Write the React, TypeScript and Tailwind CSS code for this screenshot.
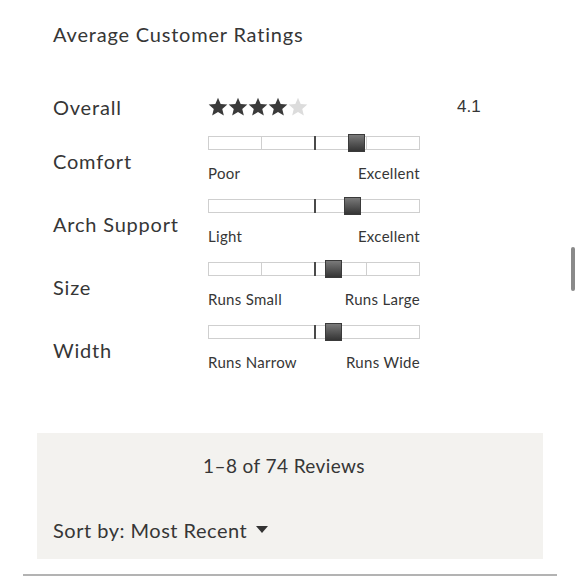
import React from "react";

type Rating = {
  label: string;
  low: string;
  high: string;
  thumb: number;
  ticks: boolean;
};

const ratings: Rating[] = [
  { label: "Comfort", low: "Poor", high: "Excellent", thumb: 140, ticks: true },
  { label: "Arch Support", low: "Light", high: "Excellent", thumb: 136, ticks: false },
  { label: "Size", low: "Runs Small", high: "Runs Large", thumb: 117, ticks: true },
  { label: "Width", low: "Runs Narrow", high: "Runs Wide", thumb: 117, ticks: false },
];

function Star({ filled }: { filled: boolean }) {
  return (
    <svg width="20" height="20" viewBox="0 0 24 24" className="shrink-0">
      <path
        d="M12 1l3.2 7.4 8 .7-6.1 5.3 1.9 7.9L12 18.1l-7 4.2 1.9-7.9L.8 9.1l8-.7z"
        fill={filled ? "#3a3a3a" : "#dcdcdc"}
      />
    </svg>
  );
}

function Slider({ thumb, ticks }: { thumb: number; ticks: boolean }) {
  return (
    <div className="relative h-[14px] w-[212px]">
      <div className="flex h-full w-full border border-[#cfcfcf] bg-white">
        <div className={`flex-1 ${ticks ? "border-r border-[#cfcfcf]" : ""}`} />
        <div className="flex-1" />
        <div className={`flex-1 ${ticks ? "border-r border-[#cfcfcf]" : ""}`} />
        <div className="flex-1" />
      </div>
      {/* center mark */}
      <div className="absolute left-[106px] top-0 h-[14px] w-[2px] bg-[#4a4a4a]" />
      {/* thumb */}
      <div
        className="absolute top-[-2px] h-[18px] w-[17px] border border-[#3a3a3a] bg-gradient-to-b from-[#7a7a7a] to-[#353535]"
        style={{ left: thumb }}
      />
    </div>
  );
}

export default function App() {
  return (
    <div
      className="relative h-[580px] w-[580px] overflow-hidden bg-white text-[#363636]"
      style={{ fontFamily: "Lato, 'Noto Sans', sans-serif" }}
    >
      <div className="px-[53px] pt-[20px]">
        <h2 className="text-[20px] leading-[28px] tracking-[0.8px]">Average Customer Ratings</h2>

        <div className="mt-[47px] flex flex-col gap-[17px]">
          <div className="flex h-[24px] items-center">
            <div className="w-[155px] text-[20px] tracking-[0.8px]">Overall</div>
            <div className="flex w-[249px]">
              <Star filled />
              <Star filled />
              <Star filled />
              <Star filled />
              <Star filled={false} />
            </div>
            <div
              className="text-[17px]"
              style={{ fontFamily: "'Liberation Sans', Arial, sans-serif" }}
            >
              4.1
            </div>
          </div>

          {ratings.map((r) => (
            <div key={r.label} className="flex items-center">
              <div className="w-[155px] pt-[4px] text-[20px] tracking-[0.8px]">{r.label}</div>
              <div className="flex w-[212px] flex-col">
                <Slider thumb={r.thumb} ticks={r.ticks} />
                <div className="mt-[14px] flex justify-between text-[15px] leading-[18px] tracking-[0.3px]">
                  <span>{r.low}</span>
                  <span>{r.high}</span>
                </div>
              </div>
            </div>
          ))}
        </div>
      </div>

      <div className="ml-[37px] mt-[62px] flex h-[126px] w-[506px] flex-col bg-[#f3f2ef]">
        <div className="pr-[12px] pt-[21px] text-center text-[19px] leading-[24px] tracking-[0.4px]">
          1–8 of 74 Reviews
        </div>
        <div className="mt-auto flex items-center gap-[9px] pb-[15px] pl-[16px] text-[20px] leading-[28px] tracking-[0.5px]">
          <span>Sort by: Most Recent</span>
          <svg width="12" height="8" viewBox="0 0 12 8">
            <path d="M0 0h12L6 7z" fill="#333" />
          </svg>
        </div>
      </div>

      <div className="ml-[23px] mt-[15px] h-[2px] w-[534px] bg-[#b3b3b3]" />

      {/* scrollbar */}
      <div className="absolute left-[571px] top-[247px] h-[44px] w-[4px] rounded-full bg-[#8a8a8a]" />
    </div>
  );
}
